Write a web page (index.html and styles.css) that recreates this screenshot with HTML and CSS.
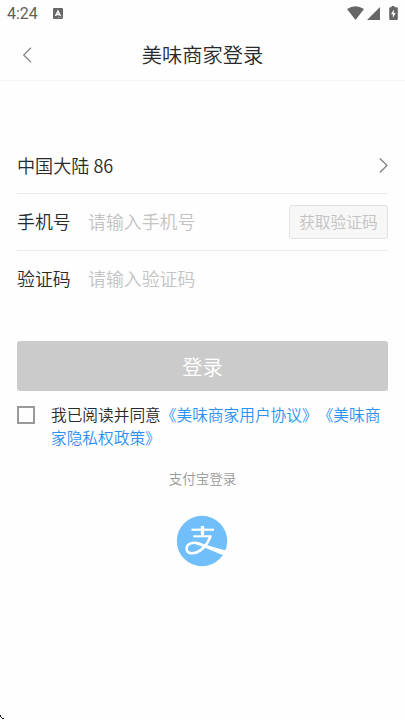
FILE: index.html
```
<!DOCTYPE html>
<html lang="zh-CN">
<head>
<meta charset="utf-8">
<title>美味商家登录</title>
<link rel="stylesheet" href="styles.css">
</head>
<body>
<div class="screen">
  <div class="status">
    <span class="time">4:24</span>
    <svg class="badge" width="10" height="11" viewBox="0 0 10 11"><rect width="10" height="11" rx="1" fill="#666"/><path d="M2.500 8 5 3 7.500 8M3.500 6.500h3" fill="none" stroke="#fff" stroke-width="1.400"/><path d="M5 9.500h4" stroke="#aaa" stroke-width=".8" stroke-dasharray="1 .5"/></svg>
    <svg class="signals" width="52" height="16" viewBox="0 0 52 16"><g fill="#666"><path d="M0 3Q8.500-2.400 17 3L8.500 14Z"/><path d="M20 14 33 1V14Z"/><path d="M44.500 0h3v1.300h2.300q1 0 1 1V13q0 1-1 1h-6.600q-1 0-1-1V2.300q0-1 1-1h1.300Z"/></g><path d="M46.800 3.500 44 8.300h1.800v3.800L48.700 7h-1.900Z" fill="#fff"/></svg>
  </div>
  <header class="header">
    <svg class="back" width="10" height="16" viewBox="0 0 10 16"><path d="M9 .8 1.700 8 9 15.200" fill="none" stroke="#888" stroke-width="1.300"/></svg>
    <h1 class="title">美味商家登录</h1>
  </header>
  <main class="content">
    <div class="row region"><span>中国大陆 86</span><svg width="10" height="16" viewBox="0 0 10 16"><path d="M1.800 .5 9 7.500 1.800 14.500" fill="none" stroke="#888" stroke-width="1.500"/></svg></div>
    <div class="row"><span class="label">手机号</span><span class="placeholder">请输入手机号</span><button class="code">获取验证码</button></div>
    <div class="row last"><span class="label">验证码</span><span class="placeholder">请输入验证码</span></div>
    <button class="login">登录</button>
    <div class="agreement"><span class="checkbox"></span><p>我已阅读并同意<a>《美味商家用户协议》</a><a>《美味商家隐私权政策》</a></p></div>
    <div class="alt">支付宝登录</div>
    <svg class="alipay" width="52" height="52" viewBox="0 0 52 52">
      <circle cx="26" cy="26" r="25.200" fill="#70bffa"/>
      <g fill="none" stroke="#fff"><path d="M15.500 14.700H38" stroke-width="2.200"/><path d="M26.500 11V21.500" stroke-width="3.200"/><path d="M17.300 21.300H35.500" stroke-width="2"/><path d="M34.500 21C32.500 27 28.500 32.500 24 35.600C18 39.600 10.700 39.400 10.700 33.500C10.700 28.200 17 26.800 23 28.600" stroke-width="2.600"/></g>
      <path d="M20 26.800C27 27.800 32 31.500 50.500 35.500L48.300 40.500C39 37.500 31 33 20 29.300Z" fill="#fff"/>
    </svg>
  </main>
  <svg class="corner" width="5" height="5" viewBox="0 0 5 5"><path d="M0 0h1v2H0ZM1 2h1v1H1ZM2 3h1v1H2ZM3 3h1v1H3Z" fill="#111"/></svg>
</div>
</body>
</html>
```
FILE: styles.css
```
* { box-sizing: border-box; }
body { margin: 0; background: #fefefe; color: #2a2a2a; font-family: "Noto Sans CJK SC", sans-serif; font-weight: 350; text-spacing-trim: space-all; }
.screen { position: relative; height: 720px; overflow: hidden; }
.status { height: 28px; display: flex; align-items: center; padding: 0 7px; color: #5f5f5f; }
.time { width: 46px; font: 400 16px/28px Roboto, sans-serif; }
.badge { display: block; margin-top: -1px; }
.signals { display: block; margin: 0 -1px 0 auto; }
.header { height: 53px; display: flex; align-items: center; border-bottom: 1px solid #f5f5f5; padding: 0 22px; }
.back { display: block; margin-top: 1px; }
.title { flex: 1; margin: 2px 10px 0 0; text-align: center; font-size: 20.25px; line-height: 30px; font-weight: inherit; }
.content { padding: 57px 17px 0; display: flex; flex-direction: column; }
.row { height: 57px; display: flex; align-items: center; border-bottom: 1px solid #ebebeb; font-size: 17.9px; line-height: 26px; }
.row > span { margin-top: -2px; }
.region { height: 56px; justify-content: space-between; font-size: 18.1px; }
.last { border-color: transparent; }
.label { width: 71px; }
.placeholder { color: #c3c3c3; }
button { font-family: inherit; font-weight: inherit; padding: 0; border: 0; }
.code { width: 99px; height: 34px; margin-left: auto; padding-bottom: 2px; border: 1px solid #e2e2e2; border-radius: 3px; background: #f7f7f7; color: #c3c3c3; font-size: 15.75px; }
.login { height: 50px; margin-top: 33px; border-radius: 3px; background: #cbcbcb; color: #fff; font-size: 20.25px; }
.agreement { display: flex; margin-top: 12px; }
.checkbox { flex: none; width: 18px; height: 18px; border: 2px solid #999; margin: 3px 16px 0 0; }
.agreement p { flex: 1; margin: 0; font-size: 15.7px; line-height: 23px; }
.agreement a { color: #2b91f5; }
.alt { margin-top: 19px; text-align: center; font-size: 13.5px; line-height: 20px; color: #999; }
.alipay { display: block; margin: 27px 160px 0 159px; }
.corner { position: absolute; left: 0; bottom: 0; }
```
